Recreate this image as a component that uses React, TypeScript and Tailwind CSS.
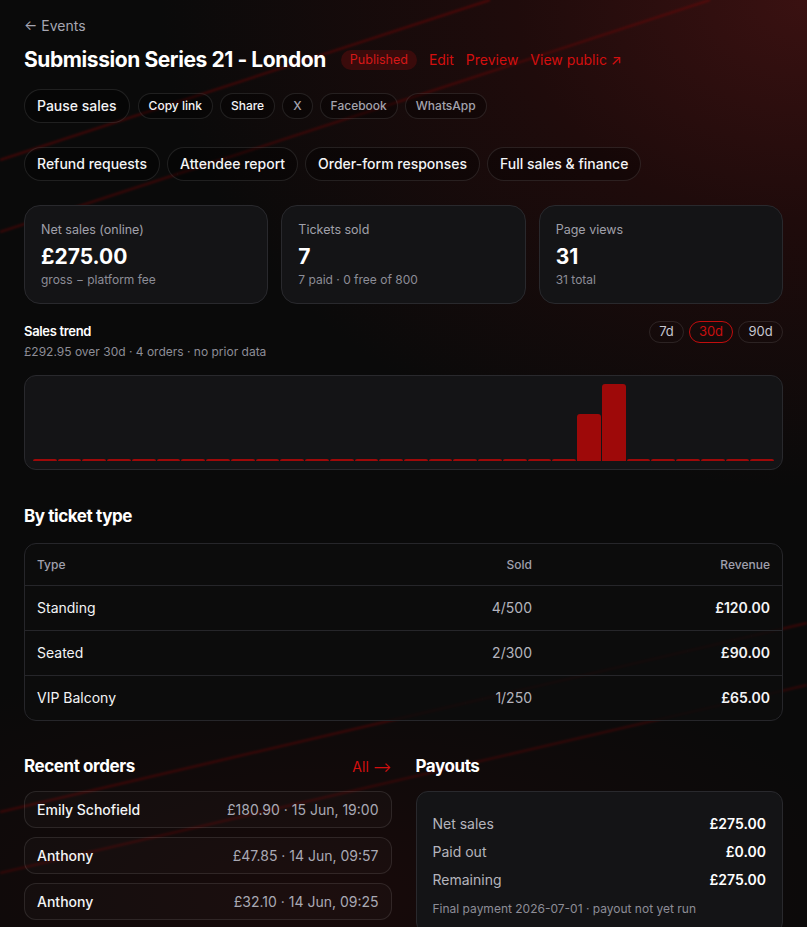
import React from 'react';

const head = "font-['Inter',sans-serif] tracking-tight";

const bars = Array.from({ length: 30 }, (_, i) => (i === 22 ? 47 : i === 23 ? 77 : 2));

const tickets = [
  { type: 'Standing', sold: '4/500', revenue: '£120.00' },
  { type: 'Seated', sold: '2/300', revenue: '£90.00' },
  { type: 'VIP Balcony', sold: '1/250', revenue: '£65.00' },
];

const orders = [
  { name: 'Emily Schofield', info: '£180.90 · 15 Jun, 19:00' },
  { name: 'Anthony', info: '£47.85 · 14 Jun, 09:57' },
  { name: 'Anthony', info: '£32.10 · 14 Jun, 09:25' },
];

function Pill({ children, big = false, muted = false }: { children: React.ReactNode; big?: boolean; muted?: boolean }) {
  return (
    <button
      className={
        big
          ? 'h-[34px] px-3 rounded-full border border-white/10 bg-black/30 text-sm font-medium text-gray-100'
          : 'h-[26px] px-[10px] rounded-full border border-white/10 bg-black/30 text-xs font-medium ' +
            (muted ? 'text-[#a3a3ad]' : 'text-gray-100')
      }
    >
      {children}
    </button>
  );
}

function Stat({ label, value, sub }: { label: string; value: string; sub: string }) {
  return (
    <div className="flex-1 h-[99px] rounded-2xl border border-[#29292d] bg-[#141416] px-4 pt-4">
      <div className="text-[12.5px] text-[#a0a0aa] leading-4">{label}</div>
      <div className="text-[21px] font-bold text-white leading-7 mt-[5px]">{value}</div>
      <div className="text-xs text-[#8d8d97] leading-4 mt-[1px]">{sub}</div>
    </div>
  );
}

export default function App() {
  return (
    <div className="relative min-h-screen overflow-hidden bg-[#0a0a0a] font-['Inter',sans-serif] text-white">
      {/* background glow + streaks */}
      <div className="pointer-events-none absolute inset-0 bg-[radial-gradient(ellipse_80%_50%_at_100%_0%,#3a1111_0%,#1f0b0b_45%,transparent_100%)]" />
      <div className="pointer-events-none absolute inset-0 bg-[radial-gradient(ellipse_70%_25%_at_40%_92%,#180a0a_0%,transparent_100%)]" />
      <svg className="pointer-events-none absolute inset-0" width="100%" height="100%">
        <defs>
          <filter id="soft">
            <feGaussianBlur stdDeviation="0.8" />
          </filter>
        </defs>
        <g filter="url(#soft)" strokeWidth="2" fill="none">
          <line x1="0" y1="160" x2="490" y2="0" stroke="#a01010" strokeOpacity="0.4" />
          <line x1="0" y1="232" x2="710" y2="0" stroke="#a01010" strokeOpacity="0.35" />
          <line x1="0" y1="812" x2="807" y2="623" stroke="#a01010" strokeOpacity="0.35" />
          <line x1="0" y1="873" x2="807" y2="685" stroke="#a01010" strokeOpacity="0.28" />
        </g>
      </svg>

      <div className="relative px-6 pt-4 pb-10">
        {/* Back link */}
        <div className="text-sm leading-5 text-[#a6a6b2]">← Events</div>

        {/* Title row */}
        <div className="mt-[10px] flex items-center h-7">
          <h1 className="text-[21px] font-bold leading-7 tracking-[-0.02em]">Submission Series 21 - London</h1>
          <span className="ml-[15px] h-5 px-[9px] flex items-center rounded-full bg-[#3a0b0b] text-[12.5px] text-[#d41818]">Published</span>
          <a className="ml-3 text-sm text-[#d40f0f]">Edit</a>
          <a className="ml-3 text-sm text-[#d40f0f]">Preview</a>
          <a className="ml-3 text-sm text-[#d40f0f]">View public ↗</a>
        </div>

        {/* Share row */}
        <div className="mt-[15px] flex items-center gap-[7px]">
          <span className="mr-[1px]">
            <Pill big>Pause sales</Pill>
          </span>
          <Pill>Copy link</Pill>
          <Pill>Share</Pill>
          <Pill muted>X</Pill>
          <Pill muted>Facebook</Pill>
          <Pill muted>WhatsApp</Pill>
        </div>

        {/* Reports row */}
        <div className="mt-6 flex items-center gap-[7px]">
          <Pill big>Refund requests</Pill>
          <Pill big>Attendee report</Pill>
          <Pill big>Order-form responses</Pill>
          <Pill big>Full sales &amp; finance</Pill>
        </div>

        {/* Stats */}
        <div className="mt-6 flex gap-[13px]">
          <Stat label="Net sales (online)" value="£275.00" sub="gross − platform fee" />
          <Stat label="Tickets sold" value="7" sub="7 paid · 0 free of 800" />
          <Stat label="Page views" value="31" sub="31 total" />
        </div>

        {/* Sales trend */}
        <div className="mt-[17px] flex justify-between items-start">
          <div>
            <div className={head + ' text-[13px] font-semibold leading-5'}>Sales trend</div>
            <div className="mt-[3px] text-xs leading-4 text-[#8d8d97]">£292.95 over 30d · 4 orders · no prior data</div>
          </div>
          <div className="flex gap-[5px]">
            <span className="h-[22px] w-[35px] flex items-center justify-center rounded-full border border-white/10 text-[13px] text-[#c6c6cf]">7d</span>
            <span className="h-[22px] w-[44px] flex items-center justify-center rounded-full border border-[#c20d0d] text-[13px] text-[#c80f0f]">30d</span>
            <span className="h-[22px] w-[45px] flex items-center justify-center rounded-full border border-white/10 text-[13px] text-[#c6c6cf]">90d</span>
          </div>
        </div>

        <div className="mt-[15px] h-[95px] rounded-xl border border-[#29292d] bg-[#141416] px-[8px] pb-[8px] flex items-end gap-px">
          {bars.map((h, i) => (
            <div key={i} className="flex-1 rounded-t-[3px] bg-[#9e0909]" style={{ height: h }} />
          ))}
        </div>

        {/* By ticket type */}
        <h2 className={head + ' mt-[34px] text-[17px] font-bold leading-6'}>By ticket type</h2>
        <div className="mt-[15px] rounded-xl border border-[#26262a] bg-[#0c0c0d]/80">
          <div className="grid grid-cols-[minmax(0,1fr)_160px_238px] px-[12px] h-[41px] items-center text-xs font-medium text-[#a0a0ad]">
            <span>Type</span>
            <span className="text-right">Sold</span>
            <span className="text-right">Revenue</span>
          </div>
          {tickets.map((t) => (
            <div key={t.type} className="grid grid-cols-[minmax(0,1fr)_160px_238px] px-[12px] h-[45px] items-center border-t border-[#26262a] text-sm">
              <span className="text-gray-100">{t.type}</span>
              <span className="text-right text-[#b4b4bd]">{t.sold}</span>
              <span className="text-right font-semibold text-gray-100">{t.revenue}</span>
            </div>
          ))}
        </div>

        {/* Recent orders & payouts */}
        <div className="mt-[34px] grid grid-cols-2 gap-6">
          <div>
            <div className="flex justify-between items-center h-6">
              <h2 className={head + ' text-[17px] font-bold'}>Recent orders</h2>
              <a className="text-sm text-[#d40f0f]">All ⟶</a>
            </div>
            <div className="mt-3 flex flex-col gap-[9px]">
              {orders.map((o, i) => (
                <div key={i} className="h-[37px] px-3 flex items-center justify-between rounded-xl border border-white/10 bg-white/[0.02] text-sm">
                  <span className="font-medium text-gray-100">{o.name}</span>
                  <span className="text-[#a9a9b4]">{o.info}</span>
                </div>
              ))}
            </div>
          </div>
          <div>
            <div className="flex items-center h-6">
              <h2 className={head + ' text-[17px] font-bold'}>Payouts</h2>
            </div>
            <div className="mt-3 rounded-xl border border-[#29292d] bg-[#141416] px-4 pt-[18px] pb-4">
              <div className="flex justify-between h-7 items-center text-sm">
                <span className="text-[#b4b4bd]">Net sales</span>
                <span className="font-semibold">£275.00</span>
              </div>
              <div className="flex justify-between h-7 items-center text-sm">
                <span className="text-[#b4b4bd]">Paid out</span>
                <span className="font-semibold">£0.00</span>
              </div>
              <div className="flex justify-between h-7 items-center text-sm">
                <span className="text-[#b4b4bd]">Remaining</span>
                <span className="font-semibold">£275.00</span>
              </div>
              <div className="mt-[7px] text-xs text-[#8d8d97]">Final payment 2026-07-01 · payout not yet run</div>
            </div>
          </div>
        </div>
      </div>
    </div>
  );
}
